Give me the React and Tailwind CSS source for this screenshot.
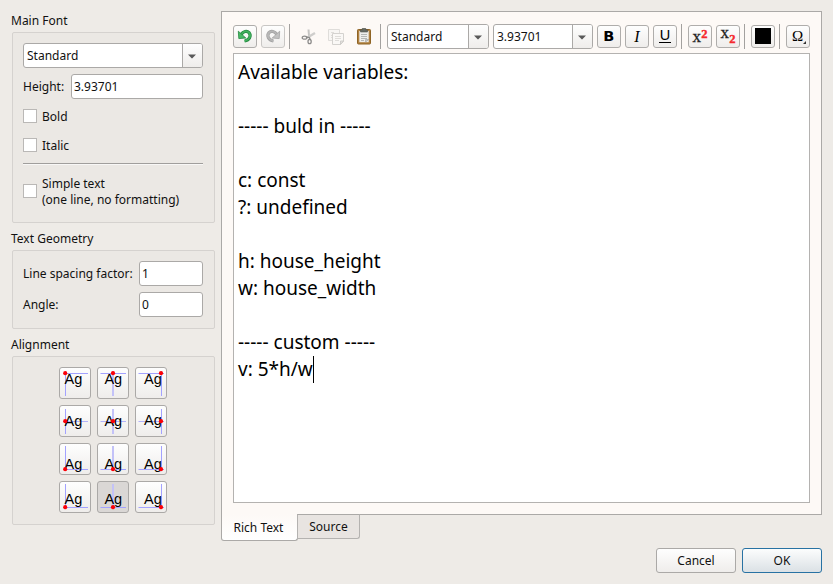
import React from "react";

const field = "box-border h-[25px] rounded-[3px] border border-[#aba9a7] bg-white";
const raised = "bg-gradient-to-b from-[#fefefe] to-[#efedeb]";

function Combo({ value, width, pad }) {
  return (
    <div className={`${field} ${width} flex shrink-0 overflow-hidden`}>
      <div className={`flex-1 leading-[23px] ${pad}`}>{value}</div>
      <div className={`flex w-5 items-center justify-center border-l border-[#aba9a7] pr-[2px] ${raised}`}>
        <svg width="8" height="5" viewBox="0 0 8 5" className="mt-0.5 shrink-0">
          <path d="M0 0.5H8L4.6 4.1Q4 4.7 3.4 4.1Z" fill="#595959" />
        </svg>
      </div>
    </div>
  );
}

function Check({ children }) {
  return (
    <div className="flex items-center gap-[5px]">
      <span className="mb-px h-[14px] w-[14px] shrink-0 border border-[#bab8b6] bg-white" />
      <span className="pt-px leading-4">{children}</span>
    </div>
  );
}

function Tool({ children, dim }) {
  return (
    <div className={`h-[23px] w-6 shrink-0 rounded-[3px] border ${dim ? "border-[#c9c7c5]" : "border-[#afadab]"} ${raised}`}>
      <svg className="overflow-visible" width="22" height="21" viewBox="0 0 22 21">{children}</svg>
    </div>
  );
}

function Sep({ margin }) {
  return <div className={`h-[25px] w-px shrink-0 bg-[#a3a19f] ${margin}`} />;
}

const xs = [5.5, 15, 25.5];
const textX = [4.5, 6.4, 8];
const rows = [
  { y: 5.5, base: [16, 16, 16] },
  { y: 15.5, base: [20.4, 20.4, 19] },
  { y: 25.5, base: [25, 25, 25] },
  { y: 25.5, base: [22, 22, 22] },
];

function AlignButton({ row, col }) {
  const { y, base } = rows[row];
  const x = xs[col];
  const active = row === 3 && col === 1;
  const top = row < 2 ? 3 : 2;
  const bottom = row < 2 ? 28 : 26;
  return (
    <div className={`h-8 w-8 rounded-[3px] border border-[#aba9a7] ${active ? "bg-[#dad7d5]" : raised}`}>
      <svg width="30" height="30" viewBox="0 0 30 30">
        <path d={`M${x} ${top}V${bottom}`} stroke={col === 1 ? "#c3c2f8" : "#a3a2ff"} strokeWidth={col === 1 ? 2 : 1} />
        <path d={`M${col === 0 ? 5 : 2.5} ${y}H28`} stroke={row === 1 ? "#b3b2fa" : "#a3a2ff"} strokeWidth="1" />
        <text x={textX[col]} y={base[col]} fontSize="14.5" fontFamily="'Liberation Sans', Arial, sans-serif" fill="#000">Ag</text>
        <circle cx={col === 0 ? 5.2 : col === 1 ? 15 : 25} cy={y - 0.3} r="2.1" fill="#fb0007" />
      </svg>
    </div>
  );
}

const documentLines = [
  "Available variables:", "", "----- buld in -----", "", "c: const", "?: undefined",
  "", "h: house_height", "w: house_width", "", "----- custom -----", "v: 5*h/w",
];

function Sidebar() {
  const box = "ml-px w-[203px] rounded-[2px] border border-[#d5d2cf] bg-[#ebe8e4] pl-[10px]";
  const title = "flex h-4 items-center leading-4";
  return (
    <aside className="w-[204px] shrink-0">
      <h2 className={`mt-[2px] ${title}`}>Main Font</h2>
      <section className={`mt-[3px] h-[191px] pt-[10px] pr-[11px] ${box}`}>
        <Combo value="Standard" width="w-[180px]" pad="pl-[3px]" />
        <div className="mt-[6px] flex items-center justify-between">
          <span>Height:</span>
          <div className={`${field} w-[132px] pl-[2px] leading-[23px]`}>3.93701</div>
        </div>
        <div className="mt-[9px]"><Check>Bold</Check></div>
        <div className="mt-[12px]"><Check>Italic</Check></div>
        <div className="mt-[9px] h-[2px] w-[180px] border-b border-[#f8f7f6] bg-[#a09e9c]" />
        <div className="mt-[10px]"><Check>Simple text<br />(one line, no formatting)</Check></div>
      </section>
      <h2 className={`mt-[8px] ${title}`}>Text Geometry</h2>
      <section className={`mt-[3px] h-[79px] pt-[10px] pr-[11px] ${box}`}>
        <div className="flex items-center justify-between">
          <span>Line spacing factor:</span>
          <div className={`${field} w-16 pl-[2px] leading-[23px]`}>1</div>
        </div>
        <div className="mt-[6px] flex items-center justify-between">
          <span>Angle:</span>
          <div className={`${field} w-16 pl-[2px] leading-[23px]`}>0</div>
        </div>
      </section>
      <h2 className={`mt-[8px] ${title}`}>Alignment</h2>
      <section className={`mt-[3px] flex h-[169px] justify-center pt-[10px] pr-[11px] ${box}`}>
        <div className="grid h-fit grid-cols-[32px_32px_32px] gap-[6px]">
          {rows.map((_, r) => xs.map((_, c) => <AlignButton key={`${r}-${c}`} row={r} col={c} />))}
        </div>
      </section>
    </aside>
  );
}

function Toolbar() {
  const serif = "'Liberation Serif', 'Times New Roman', serif";
  const sans = "'Noto Sans', sans-serif";
  return (
    <div className="flex h-[25px] items-center">
      <Tool>
        <path d="M7 8.6C9 4.6 13.5 2.8 16 5.6C19.4 9.8 16.6 15 10 16" fill="none" stroke="#23893f" strokeWidth="0" />
        <path d="M7.2 8.4C9.2 5.2 13 4.4 15 6.6C17.6 9.8 15.4 14.2 10.6 15" fill="none" stroke="#23893f" strokeWidth="3.2" />
        <path d="M7.2 8.4C9.2 5.2 13 4.4 15 6.6C17.6 9.8 15.4 14.2 10.6 15" fill="none" stroke="#41b05e" strokeWidth="1.8" />
        <path d="M4.3 5.2L4.8 12.6L11.8 12Z" fill="#48b965" stroke="#23893f" strokeWidth=".8" />
      </Tool>
      <div className="ml-1">
        <Tool dim>
          <path d="M14.8 8.4C12.8 5.2 9 4.4 7 6.6C4.4 9.8 6.6 14.2 11.4 15" fill="none" stroke="#a3a3a3" strokeWidth="3.2" />
          <path d="M14.8 8.4C12.8 5.2 9 4.4 7 6.6C4.4 9.8 6.6 14.2 11.4 15" fill="none" stroke="#b6b6b6" strokeWidth="1.8" />
          <path d="M17.7 5.2L17.2 12.6L10.2 12Z" fill="#c2c2c2" stroke="#a3a3a3" strokeWidth=".8" />
        </Tool>
      </div>
      <Sep margin="ml-1" />
      <svg className="ml-[11px] shrink-0" width="16" height="18" viewBox="0 0 16 18" fill="none">
        <path d="M7.5 1.5L8.2 10" stroke="#c6c5c3" strokeWidth="2" />
        <path d="M14 5L6.5 9.5" stroke="#cfcecc" strokeWidth="2.4" />
        <path d="M8 9L9.5 12M7.5 9L5 9.8" stroke="#8d8c8b" strokeWidth="1.4" />
        <ellipse cx="3.5" cy="9.7" rx="2.3" ry="1.5" stroke="#8d8c8b" strokeWidth="1.3" />
        <ellipse cx="8.6" cy="13.5" rx="1.6" ry="2.2" stroke="#8d8c8b" strokeWidth="1.3" />
      </svg>
      <svg className="ml-[11px] shrink-0" width="16" height="18" viewBox="0 0 16 18">
        <path d="M.5 1.5H11.5V12.5H.5Z" fill="#f8f6f4" stroke="#dfddda" />
        <path d="M3 4.5H6M3 7.5H5M3 9.5H5" stroke="#dfddda" />
        <path d="M4.5 5.5H15.5V13L12.5 16.5H4.5Z" fill="#faf8f6" stroke="#d4d2cf" />
        <path d="M7 8.5H13M7 10.5H13M7 12.5H11" stroke="#dfddda" />
        <path d="M12.5 16.5V13H15.5Z" fill="#e9e7e4" stroke="#c8c6c3" strokeWidth=".8" />
      </svg>
      <svg className="ml-[12px] shrink-0" width="16" height="18" viewBox="0 0 16 18">
        <rect x="1.5" y="1.5" width="13" height="14.5" rx=".8" fill="#b08141" stroke="#8f6425" />
        <path d="M3.3 3H12.7V14.2H3.3Z" fill="#eeeeec" />
        <path d="M5 6.5H11M5 8.5H11M5 10.5H11M5 12.5H8" stroke="#b4b6b4" />
        <path d="M9.5 14.2V11.5H12.7Z" fill="#c8cac7" stroke="#999" strokeWidth=".5" />
        <path d="M4.5 4V1.7H6.3V.3H9.7V1.7H11.5V4Z" fill="#656a63" stroke="#50544e" strokeWidth=".6" />
      </svg>
      <Sep margin="ml-2" />
      <div className="ml-[6px]"><Combo value="Standard" width="w-[102px]" pad="pl-[3px]" /></div>
      <div className="ml-1"><Combo value="3.93701" width="w-[100px]" pad="pl-[3px]" /></div>
      <div className="ml-1 flex gap-1">
        <Tool><text x="10.8" y="15.2" textAnchor="middle" fontFamily="'DejaVu Sans', sans-serif" fontWeight="700" fontSize="14.5">B</text></Tool>
        <Tool><text x="11" y="15.5" textAnchor="middle" fontFamily={serif} fontStyle="italic" fontSize="16">I</text></Tool>
        <Tool>
          <text x="11" y="14" textAnchor="middle" fontFamily={sans} fontSize="15">U</text>
          <path d="M5 16.5H17" stroke="#000" />
        </Tool>
      </div>
      <Sep margin="ml-1" />
      <div className="ml-[6px] flex gap-1">
        <Tool>
          <text x="3.6" y="16.3" fontFamily={serif} fontSize="17" fill="#222" stroke="#222" strokeWidth=".3">x</text>
          <text x="12.2" y="12" fontFamily={serif} fontWeight="700" fontSize="12.5" fill="#f5292e" stroke="#f5292e" strokeWidth=".4">2</text>
        </Tool>
        <Tool>
          <text x="3.6" y="12.3" fontFamily={serif} fontSize="17" fill="#222" stroke="#222" strokeWidth=".3">x</text>
          <text x="12.2" y="17" fontFamily={serif} fontWeight="700" fontSize="12.5" fill="#f5292e" stroke="#f5292e" strokeWidth=".4">2</text>
        </Tool>
      </div>
      <Sep margin="ml-1" />
      <div className="ml-[6px]"><Tool><rect x="3" y="2" width="16" height="16" /></Tool></div>
      <Sep margin="ml-1" />
      <div className="ml-[6px]">
        <Tool>
          <text x="10.5" y="14.5" textAnchor="middle" fontFamily={serif} fontSize="15">Ω</text>
          <path d="M19 15V18H16Z" fill="#333" />
        </Tool>
      </div>
    </div>
  );
}

export default function App() {
  return (
    <div className="flex h-[584px] w-[833px] flex-col overflow-hidden bg-[#eeebe7] pt-[11px] pr-[11px] pl-[11px] font-['Noto_Sans',sans-serif] text-[12px] text-[#111]">
      <div className="flex h-[530px]">
        <Sidebar />
        <main className="ml-[6px] w-[601px] shrink-0">
          <div className="h-[504px] border border-[#aba9a7] bg-[#fdf9f6] pt-3 pl-[11px]">
            <Toolbar />
            <div className="mt-1 h-[450px] w-[577px] border border-[#b4b2b0] bg-white pt-[5px] pl-1 text-[19px] leading-[27px] text-black">
              {documentLines.map((line, i) => (
                <div key={i} className="flex h-[27px] items-center whitespace-pre">
                  {line}
                  {i === documentLines.length - 1 && <span className="-mt-px h-[27px] w-px bg-black" />}
                </div>
              ))}
            </div>
          </div>
          <div className="-mt-px flex items-start">
            <div className="h-[27px] w-[77px] rounded-b-[3px] border border-t-0 border-[#aba9a7] bg-gradient-to-b from-[#fdf9f6] to-white pr-[2px] text-center leading-[27px]">Rich Text</div>
            <div className="-ml-px h-[25px] w-[63px] rounded-br-[3px] border border-[#b4b2b0] border-t-[#aba9a7] bg-[#e8e4e1] text-center leading-[23px]">Source</div>
          </div>
        </main>
      </div>
      <footer className="mt-[7px] flex justify-end gap-[6px]">
        <button className={`h-[25px] w-20 rounded-[3px] border border-[#aba9a7] ${raised}`}>Cancel</button>
        <button className="h-[25px] w-20 rounded-[3px] border border-[#2872a3] bg-gradient-to-b from-[#fcfdfd] to-[#dbe1e5]">OK</button>
      </footer>
    </div>
  );
}
